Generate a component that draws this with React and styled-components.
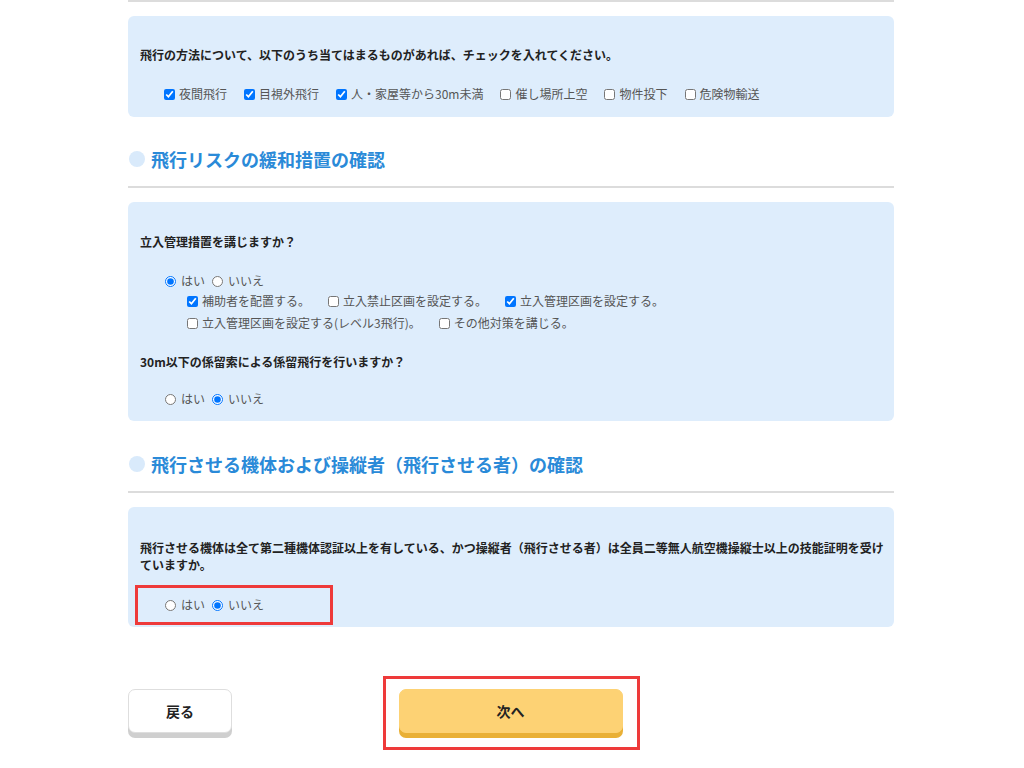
import React from "react";
import styled, { createGlobalStyle } from "styled-components";

const Global = createGlobalStyle`
  html, body { margin: 0; padding: 0; background: #fff; }
  body { font-family: "Noto Sans CJK JP", "Noto Sans", sans-serif; color: #222; }
  * { box-sizing: border-box; }
`;

const Page = styled.div`
  width: 1024px;
  padding: 0 130px 18px 128px;
`;

const Divider = styled.div`
  height: 2px;
  background: #dcdcdc;
`;

const Card = styled.section`
  background: #deedfc;
  border-radius: 6px;
  margin-top: ${(p) => p.$mt ?? 14}px;
  padding: ${(p) => p.$pt ?? 30}px 8px ${(p) => p.$pb ?? 15}px 12px;
`;

const Question = styled.p`
  margin: ${(p) => p.$mt ?? 0}px 0 0;
  font-size: 12px;
  line-height: 17px;
  font-weight: 700;
  color: #222;
`;

const OptionRow = styled.div`
  display: flex;
  flex-wrap: wrap;
  align-items: center;
  gap: 0 ${(p) => p.$gap ?? 17}px;
  margin-top: ${(p) => p.$mt ?? 0}px;
  padding-left: ${(p) => p.$indent ?? 24}px;
  height: ${(p) => p.$h ?? 18}px;
`;

const Option = styled.label`
  display: inline-flex;
  align-items: center;
  gap: ${(p) => p.$gap ?? 4}px;
  font-size: 12px;
  line-height: 18px;
  color: #555;
  white-space: nowrap;

  input {
    margin: 0;
    width: 11px;
    height: 11px;
  }
`;

const Heading = styled.h2`
  display: flex;
  align-items: center;
  gap: 6px;
  margin: ${(p) => p.$mt ?? 30}px 0 0;
  padding: 0 0 14px 1px;
  font-size: 18px;
  line-height: 26px;
  font-weight: 700;
  color: #2a8ad8;
  border-bottom: 2px solid #dcdcdc;

  &::before {
    content: "";
    width: 16px;
    height: 16px;
    border-radius: 50%;
    background: #d9eafb;
    flex: none;
  }
`;

const Highlight = styled.div`
  width: 198px;
  height: 40px;
  margin: 12px 0 0 -5px;
  border: 3px solid #ee3a3a;
  display: flex;
  align-items: center;
  padding-left: 27px;
`;

const ButtonBar = styled.div`
  display: grid;
  grid-template-columns: 1fr auto 1fr;
  align-items: center;
  margin-top: 49px;
`;

const Button = styled.button`
  width: ${(p) => p.$w}px;
  height: 44px;
  border-radius: 7px;
  border: 1px solid ${(p) => (p.$primary ? "#fdd274" : "#dedede")};
  background: ${(p) => (p.$primary ? "#fdd274" : "#fff")};
  box-shadow: 0 5px 0 ${(p) => (p.$primary ? "#e9b036" : "#cfcfcf")};
  font-family: inherit;
  font-size: 14px;
  font-weight: 700;
  color: #222;
  cursor: pointer;
  margin-bottom: 5px;
`;

const Annotated = styled.div`
  border: 3px solid #ee3a3a;
  padding: 10px 14px 9px 13px;
  justify-self: center;
  grid-column: 2;
`;

const Check = ({ label, checked }) => (
  <Option>
    <input type="checkbox" defaultChecked={checked} />
    {label}
  </Option>
);

const Radio = ({ name, label, checked }) => (
  <Option $gap={5}>
    <input type="radio" name={name} defaultChecked={checked} />
    {label}
  </Option>
);

const YesNo = ({ name, yes }) => (
  <>
    <Radio name={name} label="はい" checked={yes} />
    <Radio name={name} label="いいえ" checked={!yes} />
  </>
);

export default function App() {
  return (
    <>
      <Global />
      <Page>
        <Divider />
        <Card $pt={30} $pb={14}>
          <Question>
            飛行の方法について、以下のうち当てはまるものがあれば、チェックを入れてください。
          </Question>
          <OptionRow $mt={22} $indent={24} $gap={17}>
            <Check label="夜間飛行" checked />
            <Check label="目視外飛行" checked />
            <Check label="人・家屋等から30m未満" checked />
            <Check label="催し場所上空" />
            <Check label="物件投下" />
            <Check label="危険物輸送" />
          </OptionRow>
        </Card>

        <Heading $mt={29}>飛行リスクの緩和措置の確認</Heading>

        <Card $pt={31} $pb={13}>
          <Question>立入管理措置を講じますか？</Question>
          <OptionRow $mt={22} $indent={25} $gap={7}>
            <YesNo name="q1" yes />
          </OptionRow>
          <OptionRow $mt={0} $indent={47} $gap={18} $h={22}>
            <Check label="補助者を配置する。" checked />
            <Check label="立入禁止区画を設定する。" />
            <Check label="立入管理区画を設定する。" checked />
          </OptionRow>
          <OptionRow $indent={47} $gap={18} $h={22}>
            <Check label="立入管理区画を設定する(レベル3飛行)。" />
            <Check label="その他対策を講じる。" />
          </OptionRow>
          <Question $mt={19}>30m以下の係留索による係留飛行を行いますか？</Question>
          <OptionRow $mt={20} $indent={25} $gap={7}>
            <YesNo name="q2" />
          </OptionRow>
        </Card>

        <Heading $mt={30}>飛行させる機体および操縦者（飛行させる者）の確認</Heading>

        <Card $pt={32} $pb={2}>
          <Question>
            飛行させる機体は全て第二種機体認証以上を有している、かつ操縦者（飛行させる者）は全員二等無人航空機操縦士以上の技能証明を受けていますか。
          </Question>
          <Highlight>
            <OptionRow $indent={0} $gap={7}>
              <YesNo name="q3" />
            </OptionRow>
          </Highlight>
        </Card>

        <ButtonBar>
          <Button $w={104} type="button">戻る</Button>
          <Annotated>
            <Button $w={224} $primary type="button">次へ</Button>
          </Annotated>
        </ButtonBar>
      </Page>
    </>
  );
}
